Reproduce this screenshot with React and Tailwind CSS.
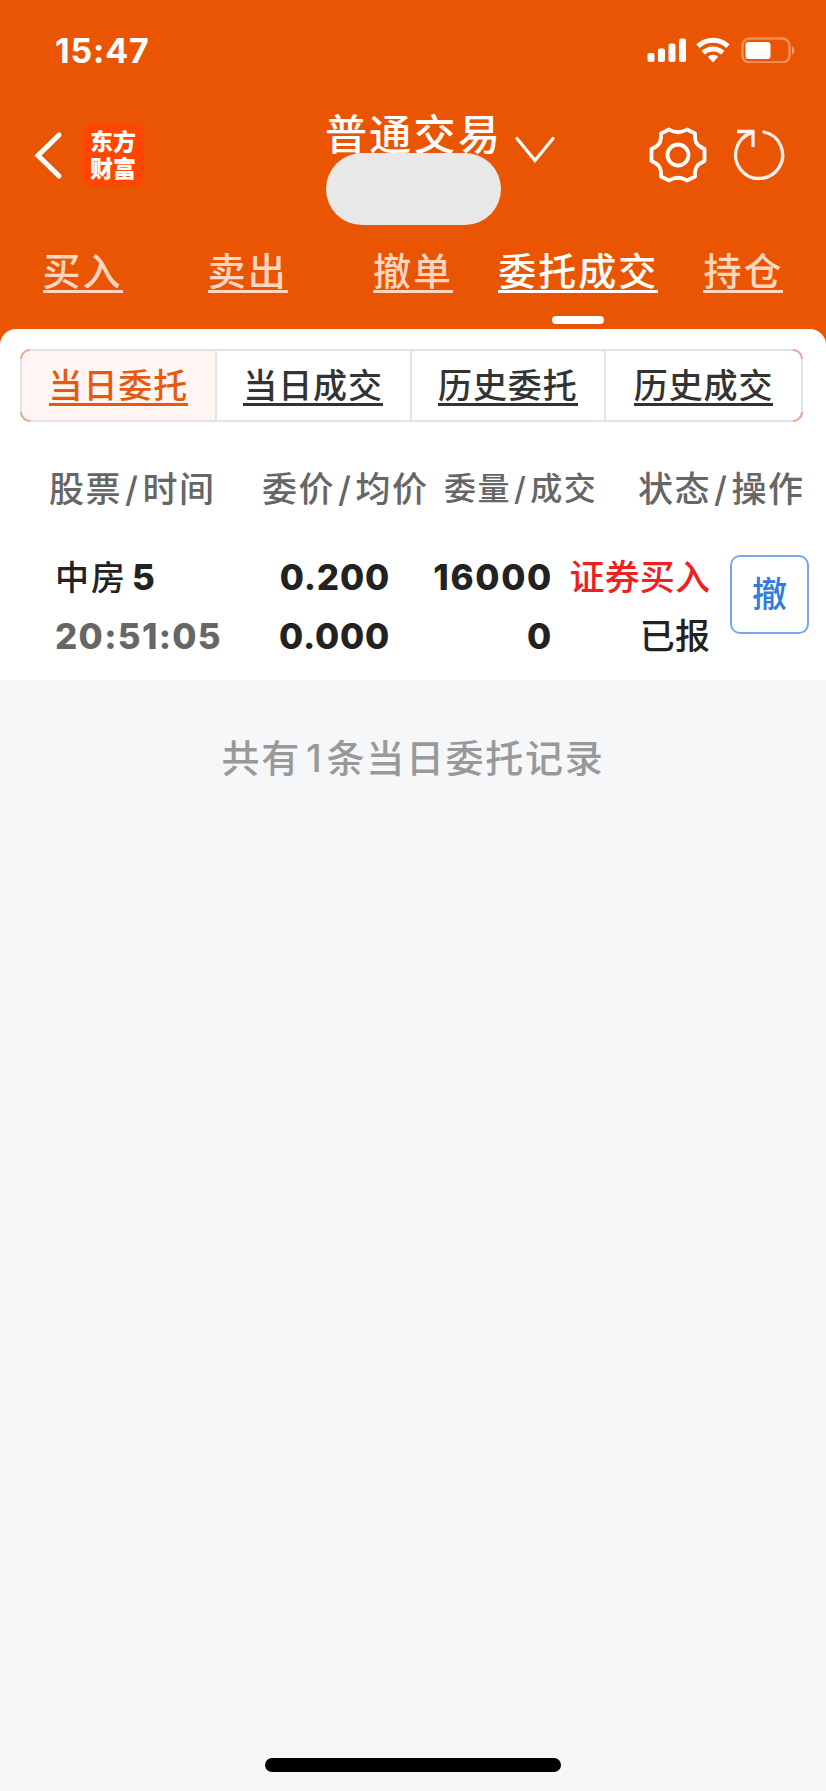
import clsx from 'clsx';

const TABS = ['买入', '卖出', '撤单', '委托成交', '持仓'];
const SUB_TABS = ['当日委托', '当日成交', '历史委托', '历史成交'];

// Coins orange du sélecteur
const CORNERS = [
  'left-0 top-0 rounded-tl-[10px] border-l-2 border-t-2',
  'left-0 bottom-0 rounded-bl-[10px] border-l-2 border-b-2',
  'right-0 top-0 rounded-tr-[10px] border-r-2 border-t-2',
  'right-0 bottom-0 rounded-br-[10px] border-r-2 border-b-2',
];

const StatusBar = () => (
  <div className="flex h-[100px] items-center justify-between pl-[55px] pr-[30px]">
    <span className="pt-[1px] text-[34px] font-bold leading-none tracking-[0.8px]">15:47</span>
    <div className="flex items-center">
      <svg width="40" height="26" viewBox="0 0 40 26" fill="currentColor">
        <rect x="0.5" y="16" width="7" height="9" rx="2" />
        <rect x="11" y="11.5" width="7" height="13.5" rx="2" />
        <rect x="21.5" y="6.5" width="7" height="18.5" rx="2" />
        <rect x="32" y="1.5" width="7" height="23.5" rx="2" />
      </svg>
      <svg className="ml-[9px]" width="34" height="26" viewBox="0 0 34 26" fill="none" stroke="currentColor" strokeWidth="5">
        <path d="M2 9.2a22 22 0 0 1 30 0" />
        <path d="M7.2 15.8a14.2 14.2 0 0 1 19.6 0" />
        <path d="M11.8 19.8a7.5 7.5 0 0 1 10.4 0L17 25.5z" fill="currentColor" stroke="none" />
      </svg>
      <svg className="ml-[10px]" width="56" height="26" viewBox="0 0 56 26" fill="none">
        <rect x="2.5" y="1.5" width="47" height="24" rx="7" stroke="currentColor" strokeOpacity="0.35" strokeWidth="2.4" />
        <rect x="5.5" y="5" width="25" height="17" rx="3" fill="currentColor" />
        <path d="M52 9.5v8c3-1 3-7 0-8z" fill="currentColor" fillOpacity="0.45" />
      </svg>
    </div>
  </div>
);

const TitleBar = () => (
  <div className="flex h-[130px] items-start">
    <div className="flex w-[326px] items-center pl-[33px] pt-[24px]">
      <svg width="30" height="50" viewBox="0 0 30 50" fill="none" stroke="currentColor" strokeWidth="5">
        <path d="M26 5 L5 25.5 L26 46" strokeLinecap="round" />
      </svg>
      <div className="ml-[19px] flex h-[62px] w-[62px] flex-col items-center justify-center rounded-[10px] bg-[#ff4600] pt-[1px] text-[23px] font-extrabold leading-[27px]">
        <span>东方</span>
        <span>财富</span>
      </div>
    </div>
    <div className="flex w-[175px] flex-col pt-[12px]">
      <span className="-ml-[1px] h-[41px] whitespace-nowrap text-[42px] font-medium leading-[46px] tracking-[2.3px]">普通交易</span>
      <div className="relative h-[72px] w-[175px] rounded-full bg-[#e8e8e8]" />
    </div>
    <svg className="ml-[13px] mt-[35px]" width="42" height="30" viewBox="0 0 42 30" fill="none" stroke="currentColor" strokeWidth="3.2" strokeLinecap="round">
      <path d="M3 3.5 L21 25.5 L39 3.5" />
    </svg>
    <svg className="ml-[92px] mt-[25px]" width="60" height="60" viewBox="-30 -30 60 60" fill="none" stroke="currentColor" strokeWidth="3.8" strokeLinejoin="round">
      <path d="M-9 -25.5 Q0 -20 9 -25.5 L17 -21.5 V-17 C17.5 -11 21 -8.5 26.5 -6 V6 C21 8.5 17.5 11 17 17 V21.5 L9 25.5 Q0 20 -9 25.5 L-17 21.5 V17 C-17.5 11 -21 8.5 -26.5 6 V-6 C-21 -8.5 -17.5 -11 -17 -17 V-21.5 Z" />
      <circle r="10.5" />
    </svg>
    <svg className="ml-[22px] mt-[25px]" width="58" height="60" viewBox="-29 -30 58 60" fill="none" stroke="currentColor" strokeOpacity="0.92" strokeWidth="3.3">
      <path d="M5 -23 A23.5 23.5 0 1 1 -7 -22.4" strokeLinecap="round" />
      <path d="M-22 -23.5 H-6 V-8" />
    </svg>
  </div>
);

const MainTabs = () => (
  <div className="grid h-[99px] grid-cols-5">
    {TABS.map(tab => {
      const active = tab === '委托成交';
      return (
        <div key={tab} className="flex flex-col items-center pt-[19px]">
          <span
            className={clsx(
              'h-[44px] whitespace-nowrap border-b-[3px] text-[38px] font-medium leading-[44px] tracking-[2px]',
              active ? 'border-white' : 'border-[#ffd6c0] text-[#ffd6c0]'
            )}
          >
            {tab}
          </span>
          {active && <div className="mt-[23px] h-[8px] w-[52px] rounded-full bg-white" />}
        </div>
      );
    })}
  </div>
);

const SubTabs = () => (
  <div className="relative ml-[20px] mr-[23px]">
    <div className="grid h-[73px] grid-cols-4 overflow-hidden rounded-[10px] border-2 border-[#e1e3e8]">
      {SUB_TABS.map((tab, idx) => (
        <div
          key={tab}
          className={clsx(
            'flex justify-center pt-[16px]',
            idx < 3 && 'border-r-2 border-[#e1e3e8]',
            idx === 0 ? 'bg-[#fff5f2] text-[#e65a10]' : 'text-[#333333]'
          )}
        >
          <span className="h-[39px] whitespace-nowrap border-b-[3px] border-current text-[34px] font-medium leading-[38px] tracking-[0.9px]">
            {tab}
          </span>
        </div>
      ))}
    </div>
    {CORNERS.map(c => (
      <span key={c} className={clsx('absolute h-[10px] w-[10px] border-[#eaa78a]', c)} />
    ))}
  </div>
);

const HeadCell = ({ left, right, className }) => (
  <div className={clsx('flex items-center whitespace-nowrap', className)}>
    <span>{left}</span>
    <span className="mx-[3px]">/</span>
    <span>{right}</span>
  </div>
);

const OrderTable = () => (
  <div>
    <div className="flex h-[126px] items-center pl-[49px] pt-[8px] text-[35px] font-medium tracking-[1.5px] text-[#666666]">
      <HeadCell left="股票" right="时间" className="w-[213px]" />
      <HeadCell left="委价" right="均价" className="w-[182px]" />
      <HeadCell left="委量" right="成交" className="w-[194px] text-[32px] tracking-[1.5px]" />
      <HeadCell left="状态" right="操作" />
    </div>

    <div className="flex h-[132px] text-[35px] font-extrabold leading-[59px] text-[#222222]">
      <div className="w-[225px] pl-[55px]">
        <div className="flex whitespace-nowrap">
          <span className="text-[34px] font-medium tracking-[2px]">中房</span>
          <span className="ml-[5px]">5</span>
        </div>
        <div className="tracking-[1.3px] text-[#666666]">20:51:05</div>
      </div>
      <div className="w-[165px] text-right tracking-[0.8px]">
        <div>0.200</div>
        <div>0.000</div>
      </div>
      <div className="w-[163px] text-right tracking-[1.7px]">
        <div>16000</div>
        <div>0</div>
      </div>
      <div className="w-[157px] whitespace-nowrap text-right text-[35px] font-medium tracking-[0.1px]">
        <div className="text-[#f02020]">证券买入</div>
        <div>已报</div>
      </div>
      <button className="ml-[20px] mt-[7px] flex h-[79px] w-[79px] items-center justify-center rounded-[10px] border-2 border-[#78a8ea] text-[35px] font-medium text-[#2f7be0]">
        撤
      </button>
    </div>
  </div>
);

const App = () => (
  <div
    lang="zh-CN"
    className="flex h-[1791px] w-[826px] flex-col bg-[#f5f7f9] font-['Inter','Noto_Sans_CJK_SC',sans-serif]"
  >
    {/* En-tête orange */}
    <div className="bg-[#ea5504] text-white">
      <StatusBar />
      <TitleBar />
      <MainTabs />
      <div className="h-[20px] rounded-t-[16px] bg-white" />
    </div>

    <div className="h-[331px] bg-white">
      <SubTabs />
      <OrderTable />
    </div>

    <div className="flex justify-center pt-[50px] text-[38px] font-medium leading-[56px] tracking-[1.7px] text-[#999999]">
      <span>共有</span>
      <span className="ml-[5px] mr-[3px]">1</span>
      <span>条当日委托记录</span>
    </div>

    {/* Indicateur d'accueil */}
    <div className="mx-auto mb-[19px] mt-auto h-[14px] w-[296px] rounded-full bg-black" />
  </div>
);

export default App;
